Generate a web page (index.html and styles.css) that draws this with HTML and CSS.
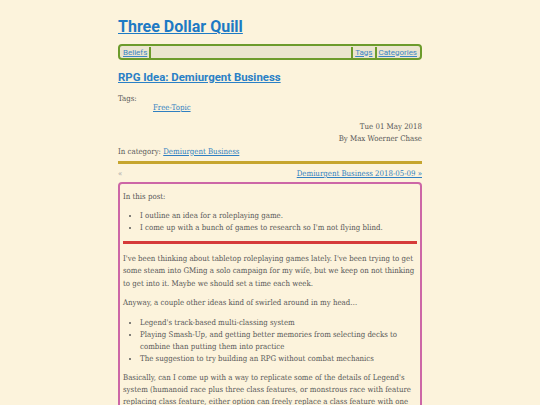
FILE: index.html
```html
<!DOCTYPE html>
<html>
<head>
<meta charset="utf-8">
<link rel="stylesheet" href="styles.css">
</head>
<body>
<div class="page">
  <header class="site-header">
    <h1 class="site-title"><a href="#">Three Dollar Quill</a></h1>
    <nav class="nav">
      <a href="#" class="nav-link">Beliefs</a>
      <span class="nav-fill"></span>
      <a href="#" class="nav-link">Tags</a>
      <a href="#" class="nav-link nav-last">Categories</a>
    </nav>
  </header>
  <article class="post">
    <h2 class="post-title"><a href="#">RPG Idea: Demiurgent Business</a></h2>
    <div class="tags">
      <div class="tags-label">Tags:</div>
      <div class="tags-list"><a href="#">Free-Topic</a></div>
    </div>
    <div class="meta">
      <div>Tue 01 May 2018</div>
      <div>By Max Woerner Chase</div>
    </div>
    <div class="category">In category: <a href="#">Demiurgent Business</a></div>
    <hr class="gold-rule">
    <div class="series-nav">
      <span class="prev">«</span>
      <a href="#">Demiurgent Business 2018-05-09 »</a>
    </div>
    <div class="content">
      <p>In this post:</p>
      <ul>
        <li>I outline an idea for a roleplaying game.</li>
        <li>I come up with a bunch of games to research so I'm not flying blind.</li>
      </ul>
      <hr class="red-rule">
      <p>I've been thinking about tabletop roleplaying games lately. I've been trying to get some steam into GMing a solo campaign for my wife, but we keep on not thinking to get into it. Maybe we should set a time each week.</p>
      <p>Anyway, a couple other ideas kind of swirled around in my head…</p>
      <ul>
        <li>Legend's track-based multi-classing system</li>
        <li>Playing Smash-Up, and getting better memories from selecting decks to combine than putting them into practice</li>
        <li>The suggestion to try building an RPG without combat mechanics</li>
      </ul>
      <p>Basically, can I come up with a way to replicate some of the details of Legend's system (humanoid race plus three class features, or monstrous race with feature replacing class feature, either option can freely replace a class feature with one from another class) in a game without combat?</p>
    </div>
  </article>
</div>
</body>
</html>
```
FILE: styles.css
```css
html, body {
  margin: 0;
  padding: 0;
  background: #fcf3dc;
}
body {
  font-family: "DejaVu Serif Condensed", "DejaVu Serif", serif;
  font-stretch: condensed;
  color: #585858;
  font-size: 7.8px;
  line-height: 12.4px;
  overflow: hidden;
  height: 405px;
}
a {
  color: #2f7fc1;
}
.page {
  width: 304px;
  margin: 0 auto;
  padding-top: 17px;
}
.site-title {
  margin: 0;
  font-family: Roboto, sans-serif;
  font-stretch: normal;
  font-weight: 700;
  font-size: 16px;
  line-height: 20px;
}
.site-title a {
  color: #1d7ac4;
}
.nav {
  margin-top: 7px;
  display: flex;
  align-items: center;
  border: 2px solid #6c9b2c;
  border-radius: 4px;
  background: #ebe5cf;
  height: 12px;
  padding: 0 1px;
  font-family: Roboto, sans-serif;
  font-stretch: normal;
  font-size: 8px;
  line-height: 11px;
}
.nav-link {
  color: #3c86c4;
  padding: 0 2px;
  border-right: 2px solid #6c9b2c;
}
.nav-fill {
  flex: 1;
  align-self: stretch;
}
.nav-last {
  border-right: none;
}
.nav-link:nth-of-type(2) {
  border-left: 2px solid #6c9b2c;
}
.post-title {
  margin: 9px 0 0;
  font-family: Roboto, sans-serif;
  font-stretch: normal;
  font-weight: 700;
  font-size: 11.4px;
  line-height: 16px;
}
.post-title a {
  color: #2a80c6;
}
.tags {
  margin-top: 10px;
  line-height: 8.5px;
}
.tags-list {
  padding-left: 35px;
}
.meta {
  margin-top: 9px;
  text-align: right;
}
.category {
  margin-top: 0;
}
.gold-rule {
  border: none;
  height: 3px;
  background: #c6a52e;
  margin: 3px 0 4px;
}
.series-nav {
  display: flex;
  justify-content: space-between;
}
.prev {
  color: #aaa;
}
.content {
  margin-top: 1px;
  border: 2px solid #cc66a6;
  border-radius: 4px;
  padding: 0 3px;
}
.content p {
  margin: 7px 0;
}
.content ul {
  margin: 7px 0;
  padding-left: 17px;
}
.content li {
  line-height: 12px;
}
.red-rule {
  border: none;
  height: 3px;
  background: #d53a3a;
  margin: 7px 0 9px;
}
```
